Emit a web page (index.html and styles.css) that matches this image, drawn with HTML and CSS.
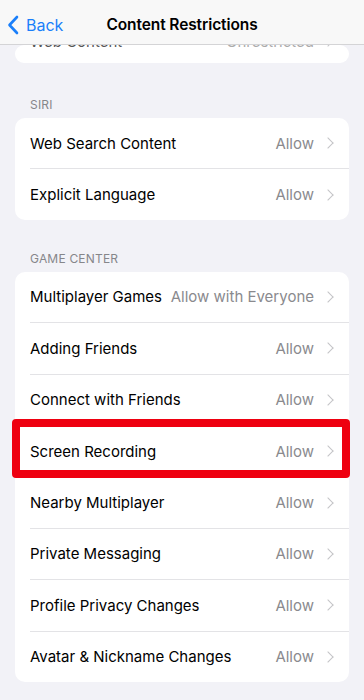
FILE: index.html
```html
<!DOCTYPE html>
<html lang="en">
<head>
    <meta charset="UTF-8">
    <meta name="viewport" content="width=device-width, initial-scale=1.0">
    <title>Content Restrictions</title>
    <link rel="stylesheet" href="styles.css">
</head>
<body>
    <div class="navbar">
        <a class="back" href="#">
            <svg class="back-icon" width="12" height="20" viewBox="0 0 12 20">
                <path d="M10 2 L2.5 10 L10 18" fill="none" stroke="#1a7ffa" stroke-width="2.6" stroke-linecap="round" stroke-linejoin="round"/>
            </svg>
            <span>Back</span>
        </a>
        <h1>Content Restrictions</h1>
    </div>

    <div class="content">
        <div class="card first">
            <div class="row"><div class="row-inner"><span class="label">Web Content</span><span class="value">Unrestricted</span><span class="chev"></span></div></div>
        </div>

        <div class="section-title">SIRI</div>
        <div class="card">
            <div class="row"><div class="row-inner"><span class="label">Web Search Content</span><span class="value">Allow</span><span class="chev"></span></div></div>
            <div class="row"><div class="row-inner"><span class="label">Explicit Language</span><span class="value">Allow</span><span class="chev"></span></div></div>
        </div>

        <div class="section-title">GAME CENTER</div>
        <div class="card">
            <div class="row"><div class="row-inner"><span class="label">Multiplayer Games</span><span class="value">Allow with Everyone</span><span class="chev"></span></div></div>
            <div class="row"><div class="row-inner"><span class="label">Adding Friends</span><span class="value">Allow</span><span class="chev"></span></div></div>
            <div class="row"><div class="row-inner"><span class="label">Connect with Friends</span><span class="value">Allow</span><span class="chev"></span></div></div>
            <div class="row marked"><div class="row-inner"><span class="label">Screen Recording</span><span class="value">Allow</span><span class="chev"></span></div></div>
            <div class="row"><div class="row-inner"><span class="label">Nearby Multiplayer</span><span class="value">Allow</span><span class="chev"></span></div></div>
            <div class="row"><div class="row-inner"><span class="label">Private Messaging</span><span class="value">Allow</span><span class="chev"></span></div></div>
            <div class="row"><div class="row-inner"><span class="label">Profile Privacy Changes</span><span class="value">Allow</span><span class="chev"></span></div></div>
            <div class="row"><div class="row-inner"><span class="label">Avatar &amp; Nickname Changes</span><span class="value">Allow</span><span class="chev"></span></div></div>
        </div>
    </div>
</body>
</html>
```

FILE: styles.css
```css
body {
    margin: 0;
    padding: 0;
    background-color: #f2f2f7;
    font-family: Inter, "Noto Sans", sans-serif;
    color: #000;
}
.navbar {
    position: fixed;
    top: 0;
    left: 0;
    right: 0;
    height: 45px;
    background: #f8f8f8;
    border-bottom: 1px solid #d4d4d6;
    box-sizing: border-box;
    display: flex;
    align-items: center;
    justify-content: center;
    z-index: 10;
}
.navbar h1 {
    margin: 0;
    font-size: 15.5px;
    font-weight: 600;
    letter-spacing: -0.1px;
    padding-top: 5px;
}
.back {
    position: absolute;
    left: 7px;
    top: 15px;
    display: flex;
    align-items: center;
    gap: 7px;
    color: #1a7ffa;
    text-decoration: none;
    font-size: 16px;
}
.content {
    padding-top: 45px;
    padding-bottom: 20px;
}
.card {
    background: #fff;
    margin: 0 15px;
    border-radius: 10px;
}
/* the list is scrolled: only the bottom of the first row shows under the bar */
.card.first {
    height: 18px;
    overflow: hidden;
}
.card.first .row {
    margin-top: -29px;
}
.card.first .row-inner {
    color: #555;
}
.card.first .value {
    color: #aaa;
}
.section-title {
    padding: 34px 30px 5px;
    font-size: 12px;
    line-height: 16px;
    color: #86868a;
    letter-spacing: 0.2px;
}
.section-title + .card + .section-title {
    padding-top: 31px;
}
.row {
    position: relative;
    padding-left: 15px;
}
.row-inner {
    height: 50.4px;
    border-bottom: 1px solid #e3e3e6;
    display: flex;
    align-items: center;
    padding-right: 15px;
    font-size: 15px;
}
.row:last-child .row-inner {
    border-bottom: none;
}
.label {
    flex: 1;
    white-space: nowrap;
}
.value {
    color: #8a8a8e;
    white-space: nowrap;
}
.chev {
    width: 7px;
    height: 7px;
    border-top: 1.6px solid #c4c4c7;
    border-right: 1.6px solid #c4c4c7;
    transform: rotate(45deg);
    margin-left: 10px;
    margin-right: 2px;
}
.marked::after {
    content: "";
    position: absolute;
    top: -7px;
    left: -3px;
    right: -1px;
    height: 59px;
    border: 8px solid #ee0010;
    border-radius: 4px;
    box-sizing: border-box;
}
```
